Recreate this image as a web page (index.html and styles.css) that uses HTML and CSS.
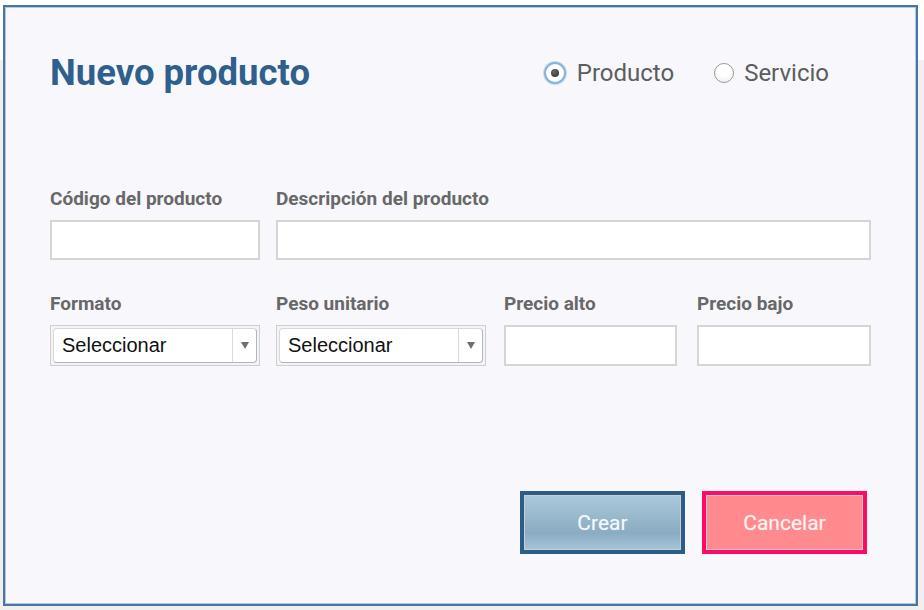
FILE: index.html
```html
<!DOCTYPE html>
<html lang="es">
<head>
<meta charset="utf-8">
<title>Nuevo producto</title>
<link rel="stylesheet" href="styles.css">
</head>
<body>
<div class="screen">
  <div class="dialog">
    <div class="head">
      <h1 class="title">Nuevo producto</h1>
      <div class="radios">
        <label class="radio"><span class="dot checked"></span>Producto</label>
        <label class="radio"><span class="dot"></span>Servicio</label>
      </div>
    </div>

    <div class="row row1">
      <div class="field w-code">
        <div class="label">Código del producto</div>
        <div class="input"></div>
      </div>
      <div class="field w-desc">
        <div class="label">Descripción del producto</div>
        <div class="input"></div>
      </div>
    </div>

    <div class="row row2">
      <div class="field w-sel">
        <div class="label">Formato</div>
        <div class="select">
          <div class="select-inner">
            <span class="select-text">Seleccionar</span>
            <span class="select-arrow"><span class="tri"></span></span>
          </div>
        </div>
      </div>
      <div class="field w-sel">
        <div class="label">Peso unitario</div>
        <div class="select">
          <div class="select-inner">
            <span class="select-text">Seleccionar</span>
            <span class="select-arrow"><span class="tri"></span></span>
          </div>
        </div>
      </div>
      <div class="field w-alto">
        <div class="label">Precio alto</div>
        <div class="input tall"></div>
      </div>
      <div class="field w-bajo">
        <div class="label">Precio bajo</div>
        <div class="input tall"></div>
      </div>
    </div>

    <div class="actions">
      <button class="btn btn-crear"><span class="btn-face">Crear</span></button>
      <button class="btn btn-cancel"><span class="btn-face">Cancelar</span></button>
    </div>
  </div>
</div>
</body>
</html>
```

FILE: styles.css
```css
* { box-sizing: border-box; }

html, body {
  margin: 0;
  padding: 0;
}

body {
  width: 924px;
  height: 610px;
  background: linear-gradient(to bottom, #ffffff 60px, #f0f0f0 60px);
  font-family: Roboto, "Liberation Sans", Arial, sans-serif;
  overflow: hidden;
}

.screen {
  padding: 5px 0 0 3px;
}

.dialog {
  width: 915px;
  height: 601px;
  background: #f7f7fc;
  border: 2px solid #4a74a1;
  box-shadow: inset 0 0 0 1px #b3c7de;
  padding: 46px 45px 0 45px;
}

.head {
  display: flex;
  align-items: center;
  justify-content: space-between;
  height: 40px;
}

.title {
  margin: 0;
  font-size: 36.5px;
  line-height: 40px;
  font-weight: 700;
  color: #2f5f8d;
}

.radios {
  display: flex;
  align-items: center;
  gap: 40px;
  margin-right: 42px;
}

.radio {
  display: flex;
  align-items: center;
  gap: 10px;
  font-size: 24px;
  line-height: 28px;
  color: #5d5d5d;
}

.dot {
  width: 20px;
  height: 20px;
  border-radius: 50%;
  border: 1px solid #9a9a9a;
  background: radial-gradient(circle at 50% 35%, #ffffff 40%, #e9e9e9 100%);
  position: relative;
}

.dot.checked {
  width: 22px;
  height: 22px;
  margin-right: 1px;
  border: 2px solid #88b3da;
  background: #ffffff;
  box-shadow: 0 0 0 1px #c7dcef;
}

.dot.checked::after {
  content: "";
  position: absolute;
  left: 50%;
  top: 50%;
  width: 8px;
  height: 8px;
  margin: -4px 0 0 -4px;
  border-radius: 50%;
  background: radial-gradient(circle at 40% 35%, #6a6a6a, #2b2b2b);
}

.row {
  display: flex;
}

.row1 {
  margin-top: 96px;
  gap: 16px;
}

.row2 {
  margin-top: 34px;
}

.field {
  display: flex;
  flex-direction: column;
}

.w-code { width: 210px; }
.w-desc { flex: 1; }
.w-sel { width: 210px; margin-right: 16px; }
.w-sel + .w-sel { margin-right: 18px; }
.w-alto { width: 173px; margin-right: 20px; }
.w-bajo { flex: 1; }

.label {
  font-size: 19px;
  line-height: 20px;
  font-weight: 700;
  color: #686868;
  margin-bottom: 11px;
  white-space: nowrap;
}

.input {
  height: 40px;
  background: #ffffff;
  border: 2px solid #d5d5d5;
}

.input.tall {
  height: 41px;
}

.select {
  height: 41px;
  border: 1px solid #cfcfcf;
  background: #f4f4f7;
  padding: 2px;
}

.select-inner {
  height: 100%;
  display: flex;
  align-items: center;
  background: #ffffff;
  border: 1px solid #d8d8d8;
  border-right-color: #a9b7c7;
  border-bottom-color: #a9b7c7;
  border-radius: 4px;
}

.select-text {
  flex: 1;
  padding-left: 8px;
  font-family: "Liberation Sans", Arial, sans-serif;
  font-size: 20px;
  color: #111111;
}

.select-arrow {
  width: 24px;
  height: 100%;
  border-left: 1px solid #dadada;
  display: flex;
  align-items: center;
  justify-content: center;
}

.tri {
  width: 0;
  height: 0;
  border-left: 4px solid transparent;
  border-right: 4px solid transparent;
  border-top: 7px solid #6f6f6f;
}

.actions {
  display: flex;
  justify-content: flex-end;
  gap: 17px;
  margin-top: 125px;
  margin-right: 4px;
}

.btn {
  width: 165px;
  height: 63px;
  padding: 0;
  border: 4px solid;
  font-family: Roboto, "Liberation Sans", Arial, sans-serif;
  font-size: 21px;
  color: #f4f8fb;
  cursor: pointer;
}

.btn-face {
  display: flex;
  align-items: center;
  justify-content: center;
  height: 100%;
  border: 1px solid #c9ced4;
  text-shadow: 0 0 1px rgba(255, 255, 255, 0.4);
}

.btn-crear {
  border-color: #2e5c88;
  background: #2e5c88;
}

.btn-crear .btn-face {
  background: linear-gradient(to bottom, #abc8da 0%, #93b4c8 50%, #8aacc2 70%, #a4c3d7 100%);
}

.btn-cancel {
  border-color: #ff0a64;
  background: #ff0a64;
}

.btn-cancel .btn-face {
  background: #ff8b8f;
  color: #fff3f3;
}
```
